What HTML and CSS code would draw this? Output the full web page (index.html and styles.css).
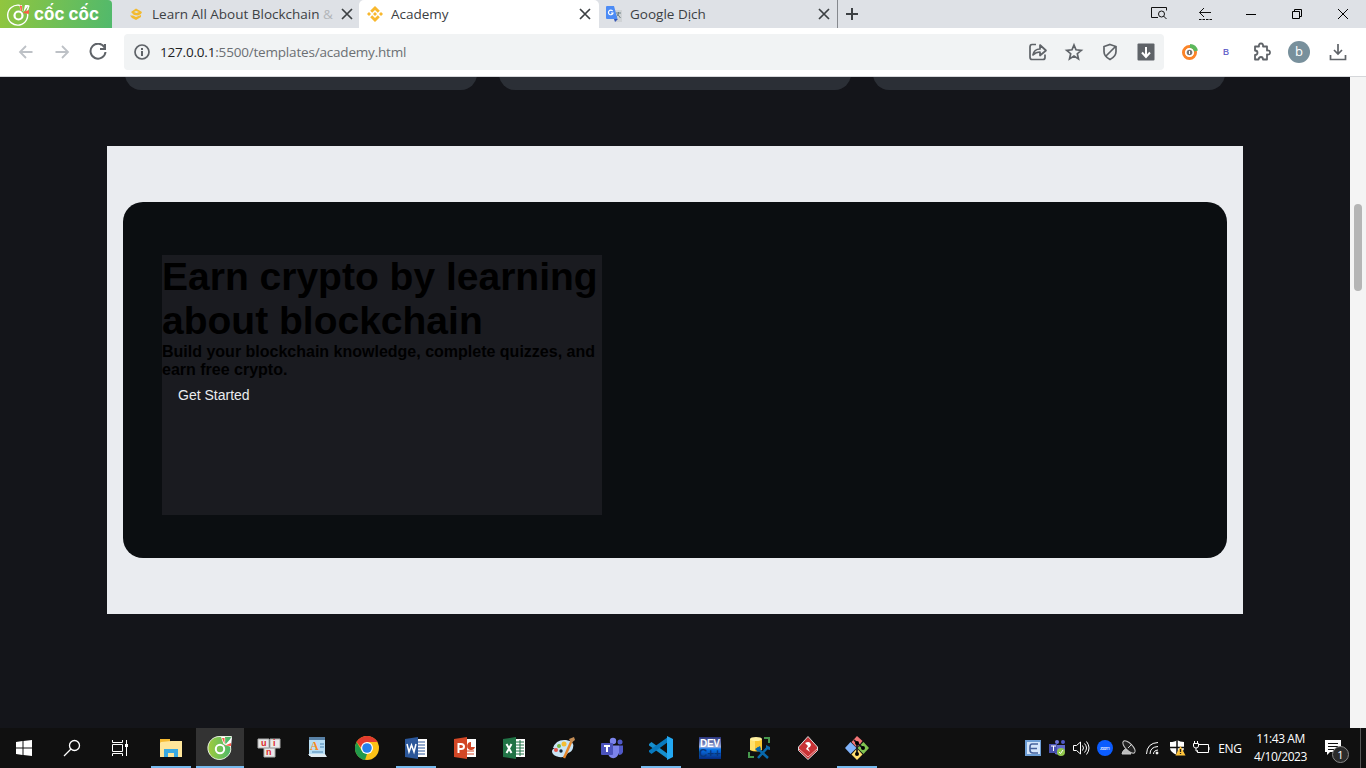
FILE: index.html
```html
<!DOCTYPE html>
<html lang="en">
<head>
<meta charset="utf-8">
<title>Academy</title>
<link rel="stylesheet" href="styles.css">
</head>
<body>
<div class="desktop">
<header class="tabstrip">
  <div class="brand">
    <svg width="24" height="24" viewBox="0 0 24 24" fill="none"><path d="M12.500 3.300A10 10 0 1 0 20 9.500l2-6" stroke="#fff" stroke-width="1.400"/><circle cx="11.500" cy="13.500" r="4" stroke="#fff" stroke-width="2.200"/><path d="m12 3 3 0 .5 6-1.500 0zM18 3l4 0-5.500 7z" fill="#fff"/><path d="m13 4 1.500 5 0-5zM21.500 8.500l-5 2 5 1z" fill="#ff5a42" stroke="#ff5a42" stroke-width=".8"/></svg>
    <span class="brand-name">cốc cốc</span>
  </div>
  <div class="tab">
    <svg class="fav" width="16" height="16" viewBox="0 0 16 16"><path d="m3 6 5-3.500L14 6l-1 2-3 1.500L6 9zM2 9.500h3L8 11l5-2v2l-5 3-4-2z" fill="#f3ba2f"/><path d="m6 6 2-1 3 1-2.500 1z" fill="#dee1e6"/></svg>
    <span class="title">Learn All About Blockchain <span class="fading">&amp;</span></span>
    <svg class="x" width="12" height="12" viewBox="0 0 12 12"><path d="m1 1 10 10M11 1 1 11"/></svg>
  </div>
  <div class="tab active">
    <svg class="fav" width="16" height="16" viewBox="0 0 16 16" fill="#f8b82e"><path d="m8 0 4.800 4.800-2 2L8 4 5.200 6.800l-2-2zM8 16l4.800-4.800-2-2L8 12 5.200 9.200l-2 2zM0 8l2-2 2 2-2 2zM12 8l2-2 2 2-2 2zM6 8l2-2 2 2-2 2z"/></svg>
    <span class="title">Academy</span>
    <svg class="x" width="12" height="12" viewBox="0 0 12 12"><path d="m1 1 10 10M11 1 1 11"/></svg>
  </div>
  <div class="tab third">
    <svg class="fav" width="16" height="16" viewBox="0 0 16 16"><path d="M7 4h9v12H9z" fill="#d0d3d6"/><path d="M10 7h5M12.500 6c0 3-1 4-3 5m2-3 3 4" stroke="#6b8085" fill="none"/><path d="m8 13 4 0-3 3z" fill="#3556b5"/><path d="M1 0h7l3.500 13H1q-1 0-1-1V1q0-1 1-1z" fill="#4c8bf5"/><path d="M6.700 5.200A2.300 2.300 0 1 0 7 7H5" stroke="#fff" fill="none" stroke-width="1.200"/></svg>
    <span class="title">Google Dịch</span>
    <svg class="x" width="12" height="12" viewBox="0 0 12 12"><path d="m1 1 10 10M11 1 1 11"/></svg>
  </div>
  <svg class="plus" width="14" height="14" viewBox="0 0 14 14"><path d="M7 1v12M1 7h12" stroke="#3c4043" stroke-width="2"/></svg>
  <div class="window-controls">
    <svg width="18" height="18" viewBox="0 0 18 18" fill="none" stroke="#111"><path d="M8 12.500H1.500v-10h15v3"/><circle cx="11.500" cy="9" r="3"/><path d="m13.500 11 3 3"/></svg>
    <svg width="18" height="18" viewBox="0 0 18 18" fill="none" stroke="#111"><path d="M15 7.500H3.500m4.500-4.500L3.500 7.500 8 12"/><path d="M3 14.500h13" stroke-dasharray="2.500 1"/></svg>
    <svg width="18" height="18" viewBox="0 0 18 18" stroke="#000"><path d="M4 9.500h10"/></svg>
    <svg width="18" height="18" viewBox="0 0 18 18" fill="none" stroke="#000"><path d="M4.500 6.500h7v7h-7zM6.500 6.500v-2h7v7h-2"/></svg>
    <svg width="18" height="18" viewBox="0 0 18 18" stroke="#000"><path d="m4 4 10 10M14 4 4 14"/></svg>
  </div>
</header>
<nav class="toolbar">
  <div class="nav-buttons">
    <svg width="18" height="18" viewBox="0 0 18 18"><path d="M15.500 9H3m6-6L3 9l6 6" stroke="#bdc1c6"/></svg>
    <svg width="18" height="18" viewBox="0 0 18 18"><path d="M2.500 9H15M9 3l6 6-6 6" stroke="#bdc1c6"/></svg>
    <svg width="18" height="18" viewBox="0 0 18 18"><path d="M15.600 4.500A7.500 7.500 0 1 0 16.500 9M16 1v5h-5" stroke="#5f6368" stroke-width="2"/></svg>
  </div>
  <div class="omnibox">
    <svg width="16" height="16" viewBox="0 0 16 16"><circle cx="8" cy="8" r="7" fill="none" stroke="#5f6368" stroke-width="1.700"/><path d="M8 7v5M8 4v2" stroke="#5f6368" stroke-width="2"/></svg>
    <span class="url"><b>127.0.0.1</b>:5500/templates/academy.html</span>
    <div class="page-actions">
      <svg width="20" height="20" viewBox="0 0 20 20"><path d="M8 2.500H4Q2 2.500 2 5v10q0 2.500 2 2.500h11q2 0 2-2v-3"/><path d="M5 13q1-6 7-6V3l6 5.500-6 5V10q-4 0-7 3z" stroke-linejoin="round"/></svg>
      <svg width="20" height="20" viewBox="0 0 20 20"><path d="m10 3 2 4.800 5.300.5-4 3.400 1.200 5.200-4.500-2.800-4.500 2.800 1.200-5.200-4-3.400 5.300-.5z"/></svg>
      <svg width="20" height="20" viewBox="0 0 20 20"><path d="m10 2.500 6 2v5q0 5-6 8-6-3-6-8v-5zM15 5l-9 9"/></svg>
      <svg width="20" height="20" viewBox="0 0 20 20"><rect x="1.500" y="1.500" width="17" height="17" rx="1" fill="#5f6368" stroke="none"/><path d="M10 5v10m-4-4.500 4 4.500 4-4.500" stroke="#fff" stroke-width="2"/></svg>
    </div>
  </div>
  <div class="extensions">
    <svg width="22" height="22" viewBox="0 0 22 22"><circle cx="10.500" cy="11.500" r="6" fill="none" stroke="#fb8428" stroke-width="3"/><path d="M11 5a6.500 6.500 0 0 1 6 5" fill="none" stroke="#5cb85c" stroke-width="4"/><circle cx="10.500" cy="11.500" r="4.300" fill="#fff"/><circle cx="10.500" cy="11.500" r="2.800" fill="#777"/><path d="M10.500 10v3" stroke="#fff"/></svg>
    <span class="ext-b">B</span>
    <svg width="22" height="22" viewBox="0 0 22 22"><path d="M4 5.500h4Q7.500 2.500 10 2.500T12 5.500h4v4q3-.5 3 2t-3 2v5h-4q0-2.500-2-2.500t-2.500 2.500H4V14q2.500 0 2.500-2.200T4 9.500z" fill="none" stroke="#5f6368" stroke-width="1.800" stroke-linejoin="round"/></svg>
    <span class="avatar">b</span>
    <svg width="22" height="22" viewBox="0 0 22 22" fill="none" stroke="#5f6368" stroke-width="1.700"><path d="M11 3v10m-4-4 4 4 4-4M3.500 14v4.500h15V14"/></svg>
  </div>
</nav>
<div class="viewport">
  <main class="page">
    <div class="cards"><div class="card"></div><div class="card"></div><div class="card"></div></div>
    <section class="promo">
      <div class="panel">
        <div class="copy">
          <h1>Earn crypto by learning about blockchain</h1>
          <h2>Build your blockchain knowledge, complete quizzes, and earn free crypto.</h2>
          <a class="start">Get Started</a>
        </div>
      </div>
    </section>
  </main>
  <div class="scrollbar"><div class="thumb"></div></div>
</div>
<footer class="taskbar">
  <div class="system">
    <div class="slot"><svg width="24" height="24" viewBox="0 0 24 24" fill="#fff"><path d="m4 6 6.500-1v6.500H4zM11.500 5 20 4v7.500h-8.500zM4 12.500h6.500V19L4 18zM11.500 12.500H20V20l-8.500-1z"/></svg></div>
    <div class="slot"><svg width="24" height="24" viewBox="0 0 24 24" fill="none" stroke="#fff" stroke-width="1.300"><circle cx="14.500" cy="9.500" r="5"/><path d="m11 13-7 7"/></svg></div>
    <div class="slot"><svg width="24" height="24" viewBox="0 0 24 24" fill="none" stroke="#fff"><path d="M4.500 4v2.500h10V4M4.500 8.500h10v7h-10zM4.500 20v-2.500h10V20M18.500 4v16"/><path d="M17 8h3v3h-3z" fill="#fff" stroke="none"/></svg></div>
  </div>
  <div class="apps">
    <div class="slot open"><svg width="24" height="24" viewBox="0 0 24 24"><path d="M1 3h10v3h12v15H1z" fill="#f5ba32"/><path d="M2 6l10-1h11v16H1V7z" fill="#ffe69a"/><path d="M5 13h14v8h-4v-4H9v4H5z" fill="#3aaae2"/></svg></div>
    <div class="slot open current"><svg width="26" height="26" viewBox="0 0 26 26"><defs><linearGradient id="cg"><stop stop-color="#a1cb3d"/><stop offset="1" stop-color="#4ab86b"/></linearGradient></defs><path d="M13 1.500h11.500l-2 7q3 7-1 11.500a11.500 11.500 0 1 1-8.500-18.500z" fill="url(#cg)" stroke="#e8f2e0"/><circle cx="13" cy="14" r="4.200" fill="none" stroke="#fff" stroke-width="2"/><path d="m14 2 4 0 .5 8-2-1zM25 2l-1 10-6-2z" fill="#fff"/><path d="m15 3 2.500 6V3zM24 8l-6 2.500 6 .5z" fill="#fa5b49"/><path d="m24 2.500-5.500 6V6L21 2.500z" fill="#4db96b"/></svg></div>
    <div class="slot"><svg width="24" height="24" viewBox="0 0 24 24" class="keys"><path d="M1 3h11v9H1zM13 3h10v9H13zM7 12h11v9H7z" fill="#e9e9e9" stroke="#aaa"/><text x="4" y="10">u</text><text x="16" y="10">i</text><text x="9" y="19">n</text></svg></div>
    <div class="slot"><svg width="24" height="24" viewBox="0 0 24 24"><path d="M3 1h16v19H3z" fill="#b7ddf4"/><path d="M3 1h16v3H3z" fill="#5881a6"/><path d="M14 8h4M14 11h4M6 16h11" stroke="#4c86b5"/><path d="M2 18h17l2 3H5z" fill="#e2edf3"/><text x="4" y="14" fill="#f78b20" font-family="Liberation Serif, serif" font-weight="bold" font-size="12">A</text></svg></div>
    <div class="slot"><svg width="24" height="24" viewBox="0 0 24 24"><circle cx="12" cy="12" r="12" fill="#fbc116"/><path d="M1.600 6A12 12 0 0 1 22.400 6H12L8 14z" fill="#e33b2e"/><path d="M1.600 6 7 15l5 3-2 6A12 12 0 0 1 1.600 6z" fill="#229a4b"/><circle cx="12" cy="12" r="6" fill="#fff"/><circle cx="12" cy="12" r="4.800" fill="#2580ea"/></svg></div>
    <div class="slot open"><svg width="24" height="24" viewBox="0 0 24 24"><path d="M12 3h11v18H12z" fill="#fff"/><path d="M14 6h7M14 9h7M14 12h7M14 15h7M14 18h7" stroke="#2b579a"/><path d="m1 3 13-2v22L1 21z" fill="#2b579a"/><path d="m3 8 2 8L7.500 9 10 16l2-8" fill="none" stroke="#fff" stroke-width="1.500"/></svg></div>
    <div class="slot"><svg width="24" height="24" viewBox="0 0 24 24"><path d="M12 3h11v18H12z" fill="#fff"/><path d="M18 6v5h4a4 4 0 1 1-4-5" fill="#d24726"/><path d="M14 15h7M14 18h7" stroke="#d24726"/><path d="m1 3 13-2v22L1 21z" fill="#d24726"/><path d="M5.500 17V8H8q3 0 3 2.500T8 13H5.500" fill="none" stroke="#fff" stroke-width="2"/></svg></div>
    <div class="slot"><svg width="24" height="24" viewBox="0 0 24 24"><path d="M12 3h11v18H12z" fill="#fff"/><path d="M14 6h8M14 9h8M14 12h8M14 15h8M14 18h8M18 4v16" stroke="#217346"/><path d="m1 3 13-2v22L1 21z" fill="#217346"/><path d="m4.500 8 5 9m0-9-5 9" stroke="#fff" stroke-width="2"/></svg></div>
    <div class="slot"><svg width="24" height="24" viewBox="0 0 24 24"><path d="M2 12Q5 3 15 4q9 1 7 8-1 4-5 5-3 5-9 4T1 16q0-4 4-3z" fill="#c9e4f5"/><circle cx="8" cy="10" r="2" fill="#77b843"/><circle cx="13" cy="8" r="2.500" fill="#f4bd32"/><circle cx="5" cy="14" r="2" fill="#e75449"/><circle cx="10" cy="15" r="1.700" fill="#132535"/><path d="m13 22 8-18" stroke="#e5862b" stroke-width="2.500"/><path d="m18 3 5-2 1 3-4 3z" fill="#c28c55"/></svg></div>
    <div class="slot"><svg width="24" height="24" viewBox="0 0 24 24"><circle cx="13" cy="5" r="3.200" fill="#7b83eb"/><circle cx="20" cy="6" r="2.500" fill="#5059c9"/><path d="M8 9.500h11V17q-2 6-7 5-4-1-4-6z" fill="#7b83eb"/><path d="M19 9.500h4V16q-1 3-4 3z" fill="#5059c9"/><rect x="1" y="7" width="12" height="12" rx="1" fill="#4b53bc"/><path d="M4 10h6M7 10v6" stroke="#fff" stroke-width="2"/></svg></div>
    <div class="slot open"><svg width="24" height="24" viewBox="0 0 24 24"><path d="m0 8 2.500-2L19 18v5L0 9.500z" fill="#168fce"/><path d="m0 16 2.500 2L19 6V1L0 14.500z" fill="#0879be"/><path d="m18 0 6 3v18l-6 3z" fill="#23a8f2"/></svg></div>
    <div class="slot"><svg width="24" height="24" viewBox="0 0 24 24" class="dev"><defs><linearGradient id="dg" x2="0" y2="1"><stop stop-color="#28337b"/><stop offset=".45" stop-color="#9daede"/><stop offset=".55" stop-color="#0877ed"/><stop offset="1" stop-color="#062c81"/></linearGradient></defs><path d="M1 1h22v22H1z" fill="url(#dg)"/><text x="2" y="11" textLength="20">DEV</text><text x="1" y="21" class="cpp" textLength="22" lengthAdjust="spacingAndGlyphs">C++</text></svg></div>
    <div class="slot"><svg width="24" height="24" viewBox="0 0 24 24"><path d="M3 3v11q6 3 12 0V3z" fill="#f9c530"/><path d="M3 3h5v12l-5-1z" fill="#ffe16c"/><ellipse cx="9" cy="3" rx="6" ry="2" fill="#fff0a0"/><path d="M17 2h5v5M2 16v5h5" fill="none" stroke="#47984d" stroke-width="2"/><path d="m10 12 11 10m0-11L11 22" stroke="#0868ac" stroke-width="2.500"/><path d="m8 13 5-3 1 3-3 3zM19 9v4l4 1v-3" fill="#0868ac"/></svg></div>
    <div class="slot"><svg width="24" height="24" viewBox="0 0 24 24"><path d="m2.500 11 9.500-10.500L21.500 11v3.500L12 23.500l-9.500-9z" fill="#c83235" stroke="#ddd"/><path d="m3 13 9 8 9-8" fill="none" stroke="#efaaaa"/><path d="M9 7q5-3 6 2-1 3-3 3l2 4-4-3 2-3z" fill="#fff"/></svg></div>
    <div class="slot open"><svg width="24" height="24" viewBox="0 0 24 24"><path d="m12 0 5.500 5-5.500 7-5.500-6z" fill="#f27576"/><path d="m5.500 6 6 6-6 6-5.500-6z" fill="#80b3fa"/><path d="m18.500 6 5.500 6-5.500 6-6-6z" fill="#83c552"/><path d="m12 12.500 5.500 6L12 24l-5.500-5.500z" fill="#ffdf6e"/><path d="M9 4l3 3v11m0-11 6 5" stroke="#14191c" stroke-width="1.700" fill="none"/><circle cx="12" cy="7" r="2"/><circle cx="12" cy="18" r="2"/><circle cx="18" cy="12" r="2"/></svg></div>
  </div>
  <div class="tray">
    <svg viewBox="0 0 18 18"><path d="M1 1h16v16H1z" fill="#6d9dd4"/><path d="M3 3h13v12H3z" fill="#d4e5fa"/><path d="M14 5H8Q6 5 6 8v3q0 3 3 3h5M6 9.500h7" fill="none" stroke="#45619c" stroke-width="1.600"/></svg>
    <svg viewBox="0 0 18 18"><circle cx="9" cy="3" r="2" fill="#7077db"/><circle cx="15" cy="3" r="2" fill="#5059c9"/><path d="M6 6h11v5q-3 6-10 4z" fill="#6169c8"/><path d="M1 5h8v9H1z" fill="#4850ae"/><path d="M3 7h5M5.500 7v5" stroke="#fff"/><circle cx="13" cy="13" r="4" fill="#91c84c"/><path d="m11 13 1.500 1.500L15 11" fill="none" stroke="#fff"/></svg>
    <svg viewBox="0 0 18 18" fill="none" stroke="#fff"><path d="M1.500 6.500h3l4-3.500v12l-4-3.500h-3zM10.500 6.500q2 2.500 0 5M12.500 4.500q4 4.500 0 9M14.500 2.500q5 6.500 0 13"/></svg>
    <svg viewBox="0 0 18 18"><circle cx="9" cy="9" r="8" fill="#0b5cff"/><text x="4" y="11" textLength="10" fill="#fff" font-size="5">zoom</text></svg>
    <svg viewBox="0 0 18 18" fill="#222" stroke="#ccc"><path d="M2 15q1-5 5-5l4 5z" fill="#bbb"/><ellipse cx="9" cy="8" rx="3.500" ry="8" transform="rotate(-45 9 8)"/><path d="m8 9 4-4"/></svg>
    <svg viewBox="0 0 18 18" fill="none" stroke="#fff"><path d="M2.500 15Q3 4 14 3.500M6 15q0-7 8-7.500M9.500 15q0-3.500 4.500-4"/><circle cx="13" cy="14" r="1" fill="#fff"/></svg>
    <svg viewBox="0 0 18 18"><path d="M2 3q5 0 7-2 3 2 7 2v6q0 4-7 7-7-3-7-7z" fill="#fff"/><path d="M9 1v15M2 8.500h14" stroke="#111" stroke-width="1.500"/><path d="m12.500 7 5 9.500h-10z" fill="#ffc43c"/><path d="M12.500 10v3M12.500 14v1" stroke="#222" stroke-width="1.300"/></svg>
    <svg viewBox="0 0 18 18" fill="none" stroke="#fff"><path d="M6 5.500h10.500v8h-11v-2M17 8v3M2.500 2v2M5.500 2v2M1.500 4.500h5V7q0 2-2.500 2T1.500 7zM4 9v3h2"/></svg>
  </div>
  <span class="lang">ENG</span>
  <div class="clock"><span>11:43 AM</span><span>4/10/2023</span></div>
  <div class="notice"><svg width="18" height="18" viewBox="0 0 18 18"><path d="M1 1h16v12H6l-3 3v-3H1z" fill="#fff"/><path d="M4 4.500h10M4 7.500h10M4 10.500h6" stroke="#111"/></svg><span class="count">1</span></div>
</footer>
</div>
</body>
</html>
```
FILE: styles.css
```css
* { box-sizing: border-box; margin: 0; padding: 0; }
body { overflow: hidden; font-family: "Open Sans", "Noto Sans", sans-serif; }
svg { display: block; flex: none; }
.desktop { width: 1366px; height: 768px; display: flex; flex-direction: column; }

.tabstrip { height: 28px; flex: none; display: flex; background: #dee1e6; }
.brand { width: 112px; display: flex; align-items: center; padding-left: 7px; gap: 3px; background: linear-gradient(100deg, #91c63e, #51b96c); border-top-right-radius: 4px; }
.brand-name { color: #fff; font: bold 17px/28px Inter, sans-serif; white-space: nowrap; }
.tab { width: 247px; display: flex; align-items: center; padding: 0 7px 0 16px; gap: 8px; }
.tab.active { width: 240px; padding: 0 8px; background: #fff; border-radius: 5px 5px 0 0; }
.tab.third { width: 239px; padding: 0 7px; border-right: 1px solid #85888d; }
.title { flex: 1; white-space: nowrap; color: #3c4043; font-size: 13.5px; line-height: 20px; }
.fading { color: #b2b5b9; }
.x { stroke: #3c4043; stroke-width: 1.7; }
.plus { align-self: center; margin-left: 7px; }
.window-controls { margin-left: auto; width: 230px; display: grid; grid-template-columns: repeat(5, 46px); place-items: center; }

.toolbar { height: 49px; flex: none; display: flex; align-items: center; background: #fff; border-bottom: 1px solid #d5d7da; }
.nav-buttons { width: 124px; display: flex; gap: 18px; padding-left: 17px; }
.nav-buttons svg { fill: none; stroke-width: 1.8; }
.omnibox { width: 1040px; height: 36px; display: flex; align-items: center; gap: 10px; padding: 0 8px 0 10px; background: #f1f3f4; border-radius: 4px; }
.url { flex: 1; font-size: 13.5px; letter-spacing: -.19px; color: #6b6f73; line-height: 20px; white-space: nowrap; }
.url b { font-weight: 400; color: #202124; }
.page-actions { display: flex; gap: 16px; }
.page-actions svg { fill: none; stroke: #5f6368; stroke-width: 1.7; }
.extensions { display: grid; grid-template-columns: 36px 36px 36px 38px 40px; place-items: center; margin-left: 8px; }
.ext-b { color: #5553c5; font: 9px "Liberation Sans", sans-serif; -webkit-text-stroke: .2px #5553c5; }
.avatar { width: 22px; height: 22px; border-radius: 50%; background: #78909c; color: #fff; text-align: center; font-size: 13px; line-height: 21px; }

.viewport { height: 651px; flex: none; display: flex; }
.page { flex: 1; background: #14151a; font-family: "Liberation Sans", Arial, sans-serif; }
.cards { display: grid; grid-template-columns: repeat(3, 352px); gap: 22px; padding-left: 125px; height: 13px; overflow: hidden; }
.card { height: 40px; margin-top: -27px; background: #2b2f36; border-radius: 16px; }
.promo { width: 1136px; height: 468px; margin: 56px auto 0; padding: 56px 16px; background: #eaecf0; }
.panel { height: 356px; border-radius: 20px; padding: 53px 39px; background: #0b0e11; }
.copy { width: 440px; height: 260px; background: #1a1b20; color: #000; }
h1 { font-size: 39px; line-height: 44px; }
h2 { font-size: 16px; line-height: 18px; }
.start { display: block; padding: 6px 16px; color: #eaecef; font-size: 14px; line-height: 20px; }
.scrollbar { width: 16px; padding: 127px 4px 0; background: #f4f4f4; }
.thumb { width: 8px; height: 87px; border-radius: 4px; background: #b5b5b5; }

.taskbar { height: 40px; flex: none; display: flex; background: #101010; color: #fff; }
.system { display: flex; width: 147px; }
.apps { display: flex; gap: 1px; }
.slot { width: 48px; display: grid; place-items: center; }
.open { background: linear-gradient(#76b9ed, #76b9ed) center bottom / 40px 2px no-repeat; }
.current { background-color: #333; background-size: 48px 2px; }
.keys text { fill: #df2929; font: bold 9px "Liberation Sans", sans-serif; }
.dev text { fill: #fff; font: bold 10px "Liberation Sans", sans-serif; }
.dev .cpp { fill: #07377e; }
.tray { display: flex; align-items: center; gap: 6px; margin-left: 143px; }
.tray svg { width: 18px; height: 18px; }
.lang { align-self: center; width: 40px; text-align: center; font-size: 12px; letter-spacing: -.3px; }
.clock { width: 61px; display: grid; align-content: center; text-align: center; font-size: 12px; line-height: 18px; letter-spacing: -.45px; white-space: nowrap; }
.notice { position: relative; width: 50px; padding: 11px 0 0 13px; border-right: 1px solid #555; }
.count { position: absolute; left: 21px; top: 18px; width: 17px; height: 17px; border-radius: 50%; border: 1px solid #888; background: #2b2b2b; font-size: 11px; line-height: 15px; text-align: center; }
```
